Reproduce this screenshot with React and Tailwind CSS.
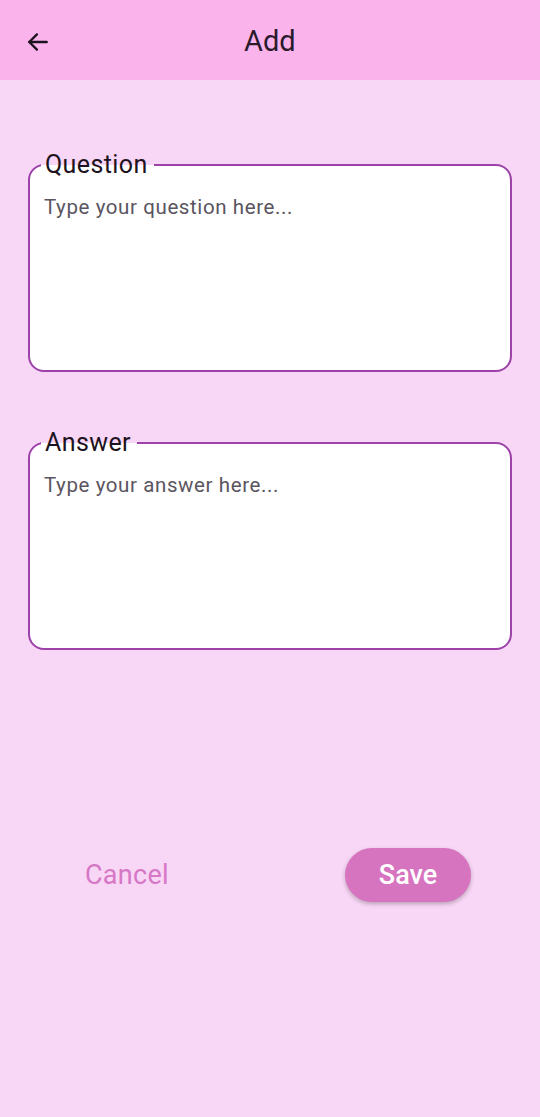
import React, { useState } from 'react';

const Field = ({ label, placeholder, value, onChange }) => {
  return (
    <div className="relative h-[208px] rounded-[16px] border-2 border-[#9d42a9] bg-white">
      <span className="absolute left-[11px] top-[-1px] -translate-y-1/2 bg-[linear-gradient(to_bottom,#f8d6f5_50%,#ffffff_50%)] pl-[4px] pr-[6px] text-[25px] leading-[28px] tracking-[0.4px] text-[#1d1320]">
        {label}
      </span>
      <textarea
        value={value}
        onChange={(e) => onChange(e.target.value)}
        placeholder={placeholder}
        className="h-full w-full resize-none rounded-[16px] bg-transparent px-[14px] pt-[29px] text-[20.5px] leading-[24px] tracking-[0.6px] text-[#1d1320] outline-none placeholder:text-[#5a5560]"
      />
    </div>
  );
};

const App = () => {
  const [question, setQuestion] = useState('');
  const [answer, setAnswer] = useState('');

  return (
    <div className="min-h-[1117px] w-[540px] bg-[#f8d6f5] font-['Roboto',sans-serif]">
      <div className="flex h-[80px] items-center bg-[#fbb3ec] px-[16px] pt-[3px]">
        <button className="flex h-[44px] w-[44px] items-center justify-center text-[#1d1320]">
          <svg width="26" height="26" viewBox="0 0 24 24" fill="none" stroke="currentColor" strokeWidth="2.2" strokeLinecap="round" strokeLinejoin="round">
            <path d="M20 12H4" />
            <path d="M11 5l-7 7 7 7" />
          </svg>
        </button>
        <h1 className="ml-[184px] text-[29px] font-normal leading-none text-[#2a1b2c]">Add</h1>
      </div>

      <div className="flex flex-col gap-[70px] px-[28px] pt-[84px]">
        <Field label="Question" placeholder="Type your question here..." value={question} onChange={setQuestion} />
        <Field label="Answer" placeholder="Type your answer here..." value={answer} onChange={setAnswer} />
      </div>

      <div className="mt-[198px] flex items-center px-[69px]">
        <button className="w-[116px] text-center text-[27px] tracking-[0.3px] text-[#d678c6]">Cancel</button>
        <button className="ml-auto h-[54px] w-[126px] rounded-full bg-[#d774c0] text-[27px] font-medium text-white shadow-[0_2px_4px_rgba(0,0,0,0.25)]">
          Save
        </button>
      </div>
    </div>
  );
};

export default App;
